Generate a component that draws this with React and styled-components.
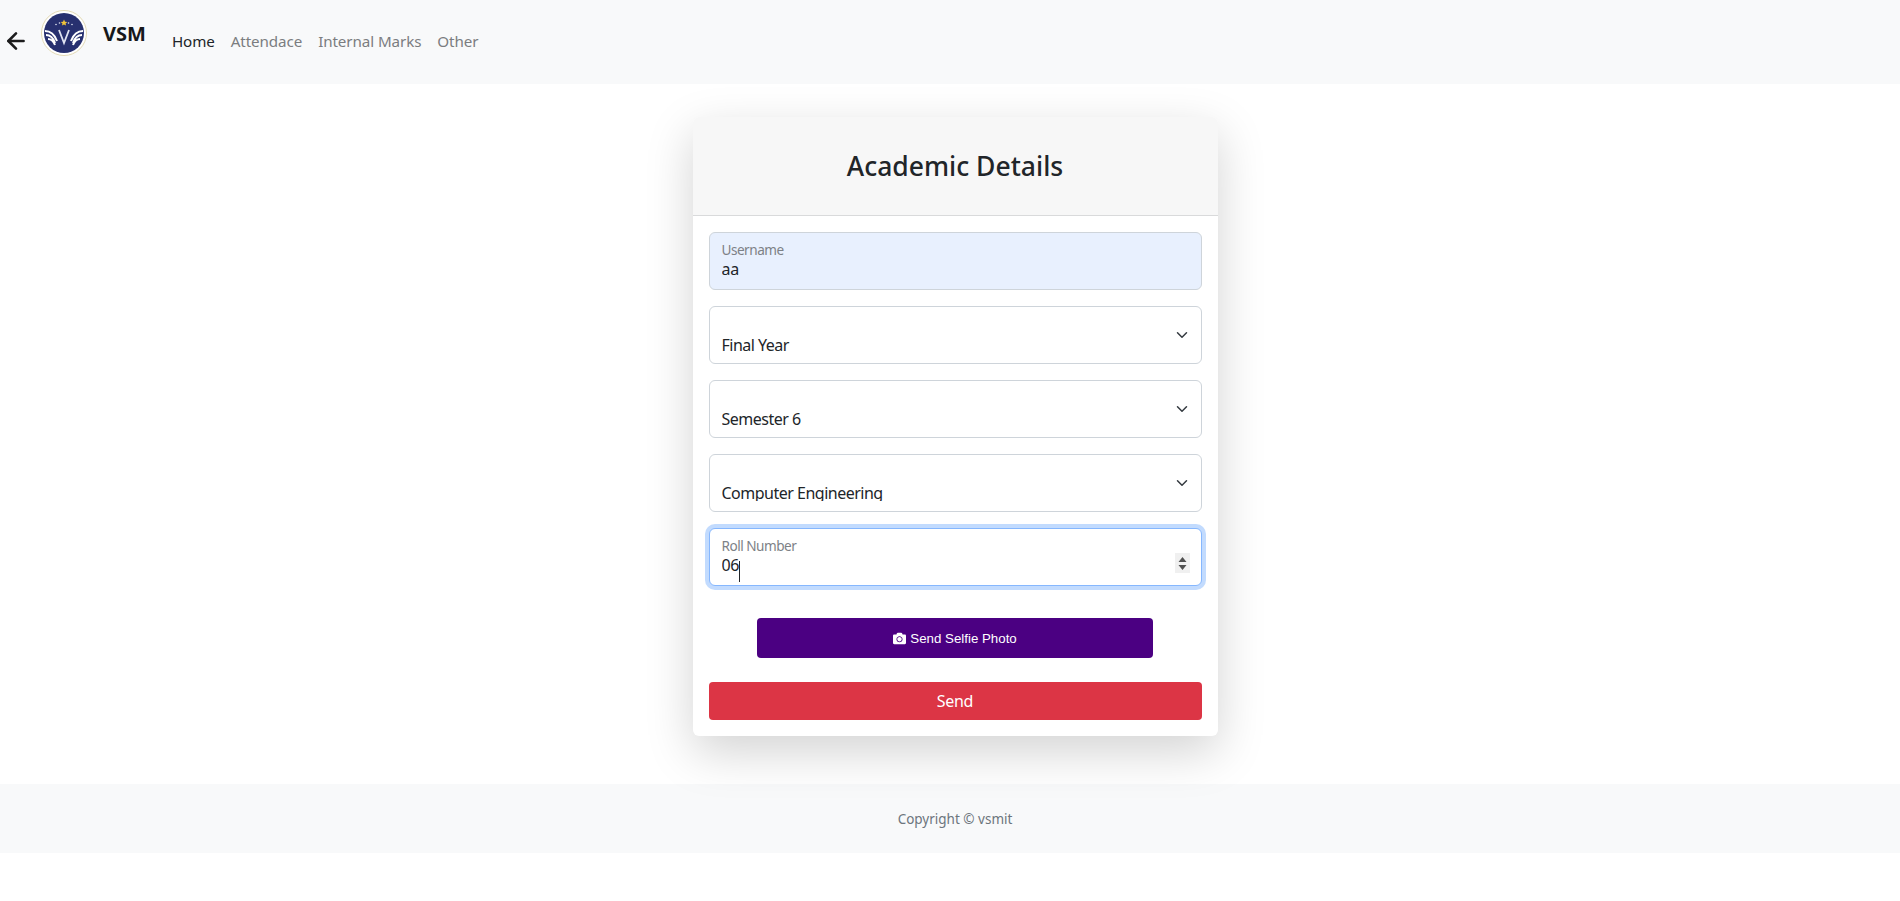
import styled, { createGlobalStyle } from "styled-components";
import { ArrowLeft } from "lucide-react";
import { FaCamera } from "react-icons/fa";

const GlobalStyle = createGlobalStyle`
  * {
    box-sizing: border-box;
  }
  body {
    margin: 0;
    background: #fff;
    color: #212529;
    font-family: "Noto Sans", "Open Sans", sans-serif;
    font-size: 16px;
  }
`;

const Navbar = styled.nav`
  display: flex;
  align-items: flex-start;
  height: 84px;
  background: #f8f9fa;
  padding-left: 3px;
`;
const BackButton = styled.button`
  display: flex;
  border: 0;
  padding: 0;
  margin: 28px 0 0 0;
  background: none;
  color: #1c1c1c;
  cursor: pointer;
`;
const LogoBox = styled.div`
  display: flex;
  margin: 10px 0 0 12px;
`;
const Brand = styled.a`
  margin: 20px 0 0 16px;
  font-size: 20px;
  line-height: 27px;
  font-weight: 700;
  color: #16181b;
`;
const NavLinks = styled.div`
  display: flex;
  gap: 16px;
  margin: 31px 0 0 26px;
`;
const NavLink = styled.a`
  font-size: 15.2px;
  line-height: 21px;
  letter-spacing: -0.1px;
  color: ${(p) => (p.$active ? "#212529" : "#7b7d80")};
`;

const Main = styled.main`
  display: flex;
  justify-content: center;
  padding: 33px 0 0 10px;
`;
const Card = styled.section`
  width: 525px;
  background: #fff;
  border-radius: 6px;
  box-shadow: 0 16px 48px rgba(0, 0, 0, 0.175);
`;
const CardHeader = styled.header`
  height: 99px;
  display: flex;
  align-items: center;
  justify-content: center;
  background: #f7f7f7;
  border-bottom: 1px solid #d9dadb;
  border-radius: 6px 6px 0 0;
`;
const Title = styled.h3`
  margin: 0;
  font-size: 26.5px;
  font-weight: 500;
  color: #212529;
`;
const Form = styled.form`
  display: flex;
  flex-direction: column;
  padding: 16px;
`;
const Field = styled.div`
  position: relative;
  margin-bottom: 16px;
`;
const Label = styled.label`
  position: absolute;
  left: 13px;
  top: 8px;
  font-size: 13.6px;
  line-height: 19px;
  letter-spacing: -0.5px;
  color: #7d8186;
`;
const TextInput = styled.input`
  display: block;
  width: 100%;
  height: 58px;
  padding: 26px 12px 10px;
  font: inherit;
  line-height: 20px;
  letter-spacing: -0.3px;
  color: #212529;
  caret-color: transparent;
  background: ${(p) => (p.$filled ? "#e8f0fe" : "#fff")};
  border: 1px solid ${(p) => (p.$focused ? "#86b7fe" : "#ced4da")};
  border-radius: 6px;
  outline: 0;
  box-shadow: ${(p) => (p.$focused ? "0 0 0 4px rgba(13, 110, 253, 0.25)" : "none")};
`;
const Select = styled.select`
  display: block;
  width: 100%;
  height: 58px;
  padding: 28px 36px 10px 12px;
  font: inherit;
  line-height: 20px;
  letter-spacing: -0.5px;
  color: #212529;
  background: #fff;
  border: 1px solid #ced4da;
  border-radius: 6px;
  appearance: none;
  outline: 0;
`;
const Chevron = styled.svg`
  position: absolute;
  right: 12px;
  top: 23px;
  width: 16px;
  height: 12px;
  pointer-events: none;
`;
const Caret = styled.span`
  position: absolute;
  left: 30px;
  top: 33px;
  width: 1px;
  height: 21px;
  background: #212529;
`;
const Spinner = styled.div`
  position: absolute;
  right: 12px;
  top: 25px;
  width: 15px;
  height: 20px;
  background: #f0f0f0;
`;
const SelfieButton = styled.button`
  display: flex;
  align-items: center;
  justify-content: center;
  gap: 4px;
  width: 396px;
  height: 40px;
  margin: 16px auto 24px;
  border: 0;
  border-radius: 4px;
  background: #4b0082;
  color: #fff;
  font-family: "Liberation Sans", Arial, sans-serif;
  font-size: 13.3px;
  cursor: pointer;
`;
const SendButton = styled.button`
  height: 38px;
  border: 0;
  border-radius: 4px;
  background: #dc3545;
  color: #fff;
  font: inherit;
  letter-spacing: -0.3px;
  cursor: pointer;
`;

const Footer = styled.footer`
  display: flex;
  align-items: center;
  justify-content: center;
  height: 69px;
  margin-top: 48px;
  padding-left: 10px;
  background: #f8f9fa;
  font-size: 13.5px;
  color: #6c757d;
`;

const Logo = () => (
  <svg width="46" height="46" viewBox="0 0 46 46">
    <circle cx="23" cy="23" r="22.5" fill="#fff" stroke="#e2d9b4" />
    <circle cx="23" cy="23" r="20" fill="#27306f" />
    <path d="M23 9.5l1 2.2 2.3.2-1.8 1.5.6 2.2-2.1-1.2-2.1 1.2.6-2.2-1.8-1.5 2.3-.2z" fill="#f2c438" />
    <circle cx="15" cy="14.5" r="0.8" fill="#dfe3f2" />
    <circle cx="18.5" cy="13" r="0.8" fill="#dfe3f2" />
    <circle cx="27.5" cy="13" r="0.8" fill="#dfe3f2" />
    <circle cx="31" cy="14.5" r="0.8" fill="#dfe3f2" />
    <path d="M4 21c5 0 9 2 12 10M5 25c4 0 7 2 9 8M7 29c3 0 5 1 7 6" fill="none" stroke="#fff" strokeWidth="2" />
    <path d="M42 21c-5 0-9 2-12 10M41 25c-4 0-7 2-9 8M39 29c-3 0-5 1-7 6" fill="none" stroke="#fff" strokeWidth="2" />
    <path d="M18 20l5 13 5-13" fill="none" stroke="#dfe3f2" strokeWidth="1.8" />
  </svg>
);

const ChevronIcon = () => (
  <Chevron viewBox="0 0 16 16">
    <path d="m2 5 6 6 6-6" fill="none" stroke="#343a40" strokeWidth="2" strokeLinecap="round" strokeLinejoin="round" />
  </Chevron>
);

const selects = [
  { name: "year", options: ["Final Year"] },
  { name: "semester", options: ["Semester 6"] },
  { name: "branch", options: ["Computer Engineering"] },
];

const App = () => {
  return (
    <>
      <GlobalStyle />
      <Navbar>
        <BackButton type="button">
          <ArrowLeft size={26} strokeWidth={2.4} />
        </BackButton>
        <LogoBox>
          <Logo />
        </LogoBox>
        <Brand>VSM</Brand>
        <NavLinks>
          <NavLink $active>Home</NavLink>
          <NavLink>Attendace</NavLink>
          <NavLink>Internal Marks</NavLink>
          <NavLink>Other</NavLink>
        </NavLinks>
      </Navbar>
      <Main>
        <Card>
          <CardHeader>
            <Title>Academic Details</Title>
          </CardHeader>
          <Form>
            <Field>
              <TextInput $filled defaultValue="aa" />
              <Label>Username</Label>
            </Field>
            {selects.map((s) => (
              <Field key={s.name}>
                <Select name={s.name}>
                  {s.options.map((o) => (
                    <option key={o}>{o}</option>
                  ))}
                </Select>
                <ChevronIcon />
              </Field>
            ))}
            <Field>
              <TextInput $focused defaultValue="06" />
              <Label>Roll Number</Label>
              <Caret />
              <Spinner>
                <svg width="15" height="20" viewBox="0 0 15 20">
                  <path d="M7.5 4l4 5h-8zM7.5 17l-4-5h8z" fill="#505050" />
                </svg>
              </Spinner>
            </Field>
            <SelfieButton type="button">
              <FaCamera size={13} /> Send Selfie Photo
            </SelfieButton>
            <SendButton type="button">Send</SendButton>
          </Form>
        </Card>
      </Main>
      <Footer>Copyright © vsmit</Footer>
    </>
  );
};

export default App;
